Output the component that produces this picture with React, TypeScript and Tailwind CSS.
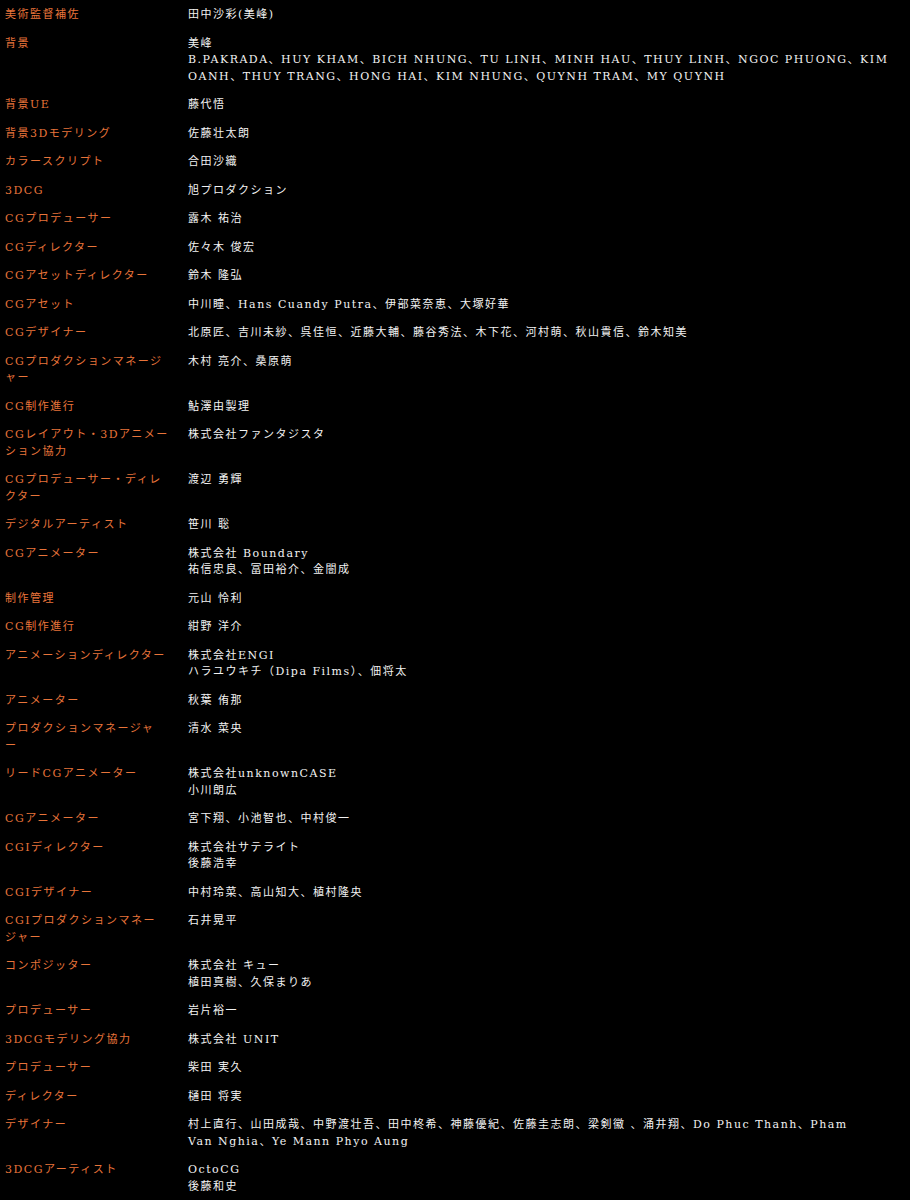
import React from "react";

type Row = { label: string[]; value: string[] };

const rows: Row[] = [
  { label: ["美術監督補佐"], value: ["田中沙彩(美峰)"] },
  {
    label: ["背景"],
    value: [
      "美峰",
      "B.PAKRADA、HUY KHAM、BICH NHUNG、TU LINH、MINH HAU、THUY LINH、NGOC PHUONG、KIM OANH、THUY TRANG、HONG HAI、KIM NHUNG、QUYNH TRAM、MY QUYNH",
    ],
  },
  { label: ["背景UE"], value: ["藤代悟"] },
  { label: ["背景3Dモデリング"], value: ["佐藤壮太朗"] },
  { label: ["カラースクリプト"], value: ["合田沙織"] },
  { label: ["3DCG"], value: ["旭プロダクション"] },
  { label: ["CGプロデューサー"], value: ["露木 祐治"] },
  { label: ["CGディレクター"], value: ["佐々木 俊宏"] },
  { label: ["CGアセットディレクター"], value: ["鈴木 隆弘"] },
  { label: ["CGアセット"], value: ["中川瞳、Hans Cuandy Putra、伊部菜奈恵、大塚好華"] },
  {
    label: ["CGデザイナー"],
    value: ["北原匠、吉川未紗、呉佳恒、近藤大輔、藤谷秀法、木下花、河村萌、秋山貴信、鈴木知美"],
  },
  { label: ["CGプロダクションマネージ", "ャー"], value: ["木村 亮介、桑原萌"] },
  { label: ["CG制作進行"], value: ["鮎澤由製理"] },
  { label: ["CGレイアウト・3Dアニメー", "ション協力"], value: ["株式会社ファンタジスタ"] },
  { label: ["CGプロデューサー・ディレ", "クター"], value: ["渡辺 勇輝"] },
  { label: ["デジタルアーティスト"], value: ["笹川 聡"] },
  { label: ["CGアニメーター"], value: ["株式会社 Boundary", "祐信忠良、冨田裕介、金闇成"] },
  { label: ["制作管理"], value: ["元山 怜利"] },
  { label: ["CG制作進行"], value: ["紺野 洋介"] },
  {
    label: ["アニメーションディレクター"],
    value: ["株式会社ENGI", "ハラユウキチ（Dipa Films）、佃将太"],
  },
  { label: ["アニメーター"], value: ["秋葉 侑那"] },
  { label: ["プロダクションマネージャ", "ー"], value: ["清水 菜央"] },
  { label: ["リードCGアニメーター"], value: ["株式会社unknownCASE", "小川朗広"] },
  { label: ["CGアニメーター"], value: ["宮下翔、小池智也、中村俊一"] },
  { label: ["CGIディレクター"], value: ["株式会社サテライト", "後藤浩幸"] },
  { label: ["CGIデザイナー"], value: ["中村玲菜、高山知大、植村隆央"] },
  { label: ["CGIプロダクションマネー", "ジャー"], value: ["石井晃平"] },
  { label: ["コンポジッター"], value: ["株式会社 キュー", "植田真樹、久保まりあ"] },
  { label: ["プロデューサー"], value: ["岩片裕一"] },
  { label: ["3DCGモデリング協力"], value: ["株式会社 UNIT"] },
  { label: ["プロデューサー"], value: ["柴田 実久"] },
  { label: ["ディレクター"], value: ["樋田 将実"] },
  {
    label: ["デザイナー"],
    value: [
      "村上直行、山田成哉、中野渡壮吾、田中柊希、神藤優紀、佐藤圭志朗、梁剣徽 、涌井翔、Do Phuc Thanh、Pham",
      "Van Nghia、Ye Mann Phyo Aung",
    ],
  },
  { label: ["3DCGアーティスト"], value: ["OctoCG", "後藤和史"] },
];

export default function App() {
  return (
    <div
      className="min-h-[1200px] w-full bg-black pl-[5px] pr-[16px] pt-[7px] text-[11px] leading-[16.5px] tracking-[1.5px]"
      style={{ fontFamily: '"DejaVu Serif", "Noto Sans CJK JP", serif' }}
    >
      <div className="flex flex-col gap-[12px]">
        {rows.map((r, i) => (
          <div key={i} className="grid grid-cols-[171px_1fr] gap-x-[12px]">
            <div className="text-[#e8743a]">
              {r.label.map((l, j) => (
                <div key={j} className="whitespace-nowrap">
                  {l}
                </div>
              ))}
            </div>
            <div className="text-[#f2f2f2]">
              {r.value.map((v, j) => (
                <div key={j}>{v}</div>
              ))}
            </div>
          </div>
        ))}
      </div>
    </div>
  );
}
